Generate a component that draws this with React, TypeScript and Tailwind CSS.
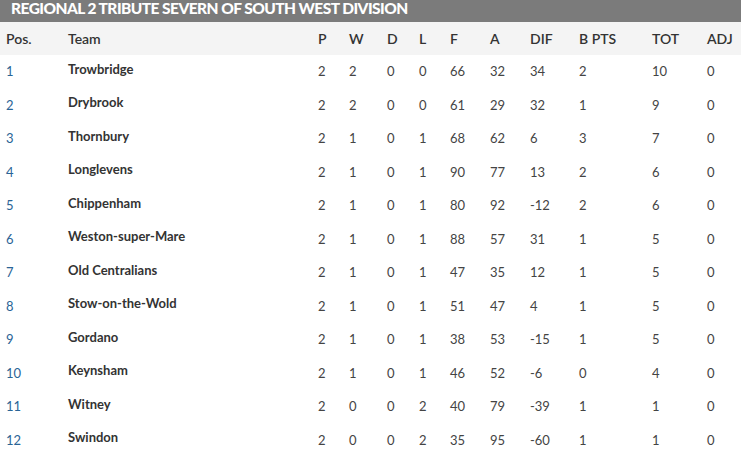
const rows: [number, string, number, number, number, number, number, number, number, number, number, number][] = [
  [1, 'Trowbridge', 2, 2, 0, 0, 66, 32, 34, 2, 10, 0],
  [2, 'Drybrook', 2, 2, 0, 0, 61, 29, 32, 1, 9, 0],
  [3, 'Thornbury', 2, 1, 0, 1, 68, 62, 6, 3, 7, 0],
  [4, 'Longlevens', 2, 1, 0, 1, 90, 77, 13, 2, 6, 0],
  [5, 'Chippenham', 2, 1, 0, 1, 80, 92, -12, 2, 6, 0],
  [6, 'Weston-super-Mare', 2, 1, 0, 1, 88, 57, 31, 1, 5, 0],
  [7, 'Old Centralians', 2, 1, 0, 1, 47, 35, 12, 1, 5, 0],
  [8, 'Stow-on-the-Wold', 2, 1, 0, 1, 51, 47, 4, 1, 5, 0],
  [9, 'Gordano', 2, 1, 0, 1, 38, 53, -15, 1, 5, 0],
  [10, 'Keynsham', 2, 1, 0, 1, 46, 52, -6, 0, 4, 0],
  [11, 'Witney', 2, 0, 0, 2, 40, 79, -39, 1, 1, 0],
  [12, 'Swindon', 2, 0, 0, 2, 35, 95, -60, 1, 1, 0],
]

const headers = ['Pos.', 'Team', 'P', 'W', 'D', 'L', 'F', 'A', 'DIF', 'B PTS', 'TOT', 'ADJ']

const cols = 'grid grid-cols-[62px_250px_31px_38px_32px_31px_40px_40px_49px_73px_55px_34px] pl-[6px]'

export default function App() {
  return (
    <div className="w-[741px] h-[468px] overflow-hidden bg-white font-['Lato',sans-serif]">
      <div className="h-[22px] bg-[#7b7b7b] pl-[11px]">
        <h2 className="text-white font-black text-[15.5px] leading-[17px] tracking-[-0.55px]">
          REGIONAL 2 TRIBUTE SEVERN OF SOUTH WEST DIVISION
        </h2>
      </div>
      <div className={`${cols} h-[33px] items-center bg-[#f4f4f4] text-[14px] font-semibold text-[#333]`}>
        {headers.map(h => (
          <span key={h}>{h}</span>
        ))}
      </div>
      {rows.map(r => (
        <div key={r[0]} className={`${cols} h-[33.5px] items-center text-[13px] text-[#444]`}>
          <span className="text-[#2a6496]">{r[0]}</span>
          <span className="font-bold text-[#333] text-[13px] -mt-[5px]">{r[1]}</span>
          {r.slice(2).map((v, i) => (
            <span key={i}>{v}</span>
          ))}
        </div>
      ))}
    </div>
  )
}
